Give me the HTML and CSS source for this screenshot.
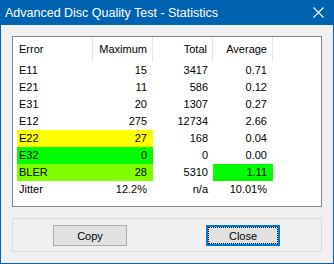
FILE: index.html
```html
<!DOCTYPE html>
<html lang="en">
<head>
    <meta charset="UTF-8">
    <title>Advanced Disc Quality Test - Statistics</title>
    <link rel="stylesheet" href="styles.css">
</head>
<body>
    <div class="window">
        <div class="titlebar">
            <span class="title">Advanced Disc Quality Test - Statistics</span>
            <svg class="close-x" width="11" height="11" viewBox="0 0 11 11">
                <path d="M0.5 0.5 L10.5 10.5 M10.5 0.5 L0.5 10.5" stroke="#fff" stroke-width="1.1" fill="none"/>
            </svg>
        </div>

        <div class="content">
            <div class="listbox">
                <div class="head">
                    <div class="hcell first">Error</div>
                    <div class="hcell">Maximum</div>
                    <div class="hcell">Total</div>
                    <div class="hcell">Average</div>
                </div>

                <div class="row"><div class="main"><span>E11</span><span>15</span></div><div class="num">3417</div><div class="num avg">0.71</div></div>
                <div class="row"><div class="main"><span>E21</span><span>11</span></div><div class="num">586</div><div class="num avg">0.12</div></div>
                <div class="row"><div class="main"><span>E31</span><span>20</span></div><div class="num">1307</div><div class="num avg">0.27</div></div>
                <div class="row"><div class="main"><span>E12</span><span>275</span></div><div class="num">12734</div><div class="num avg">2.66</div></div>
                <div class="row"><div class="main yellow"><span>E22</span><span>27</span></div><div class="num">168</div><div class="num avg">0.04</div></div>
                <div class="row"><div class="main green"><span>E32</span><span>0</span></div><div class="num">0</div><div class="num avg">0.00</div></div>
                <div class="row"><div class="main lime"><span>BLER</span><span>28</span></div><div class="num">5310</div><div class="num avg green">1.11</div></div>
                <div class="row"><div class="main"><span>Jitter</span><span>12.2%</span></div><div class="num">n/a</div><div class="num avg">10.01%</div></div>
            </div>

            <div class="footer">
                <button class="btn">Copy</button>
                <button class="btn focused">Close</button>
            </div>
        </div>
    </div>
</body>
</html>
```

FILE: styles.css
```css
body {
    margin: 0;
    font-family: "Liberation Sans", Arial, sans-serif;
    font-size: 11px;
    color: #000;
    background-color: #f0f0f0;
}
.window {
    width: 334px;
    height: 264px;
    box-sizing: border-box;
    border: 1px solid #0063b1;
    border-top: 0;
    background-color: #f0f0f0;
    display: flex;
    flex-direction: column;
}
.titlebar {
    height: 26px;
    background-color: #0063b1;
    color: #fff;
    display: flex;
    align-items: center;
    justify-content: space-between;
    padding: 0 10px 0 5px;
    margin: 0 -1px;
}
.title {
    font-size: 12.5px;
}
.close-x {
    display: block;
}
.content {
    padding: 11px;
}
.listbox {
    height: 171px;
    box-sizing: border-box;
    border: 1px solid #828790;
    background-color: #fff;
}
.head {
    display: flex;
    height: 25px;
    line-height: 25px;
}
.hcell {
    width: 60px;
    box-sizing: border-box;
    border-right: 1px solid #e5e5e5;
    text-align: right;
    padding-right: 5px;
}
.hcell.first {
    width: 80px;
    text-align: left;
    padding-left: 6px;
}
.row {
    display: flex;
    height: 17px;
    line-height: 17px;
}
.main {
    margin-left: 4px;
    width: 136px;
    box-sizing: border-box;
    display: flex;
    justify-content: space-between;
    padding: 0 6px 0 2px;
}
.num {
    width: 60px;
    box-sizing: border-box;
    text-align: right;
    padding-right: 5px;
}
.num.avg {
    padding-right: 6px;
}
.yellow {
    background-color: #ffff00;
}
.green {
    background-color: #00ff00;
}
.lime {
    background-color: #80ff00;
}
.footer {
    margin-top: 11px;
    height: 34px;
    box-sizing: border-box;
    border: 1px solid #dcdcdc;
    display: flex;
    gap: 79px;
    padding: 6px 0 0 40px;
}
.btn {
    width: 74px;
    height: 21px;
    box-sizing: border-box;
    background-color: #e1e1e1;
    border: 1px solid #adadad;
    font-family: "Liberation Sans", Arial, sans-serif;
    font-size: 11px;
    color: #000;
    padding: 0;
}
.btn.focused {
    border: 2px solid #0078d7;
    outline: 1px dotted #000;
    outline-offset: -3px;
}
```
